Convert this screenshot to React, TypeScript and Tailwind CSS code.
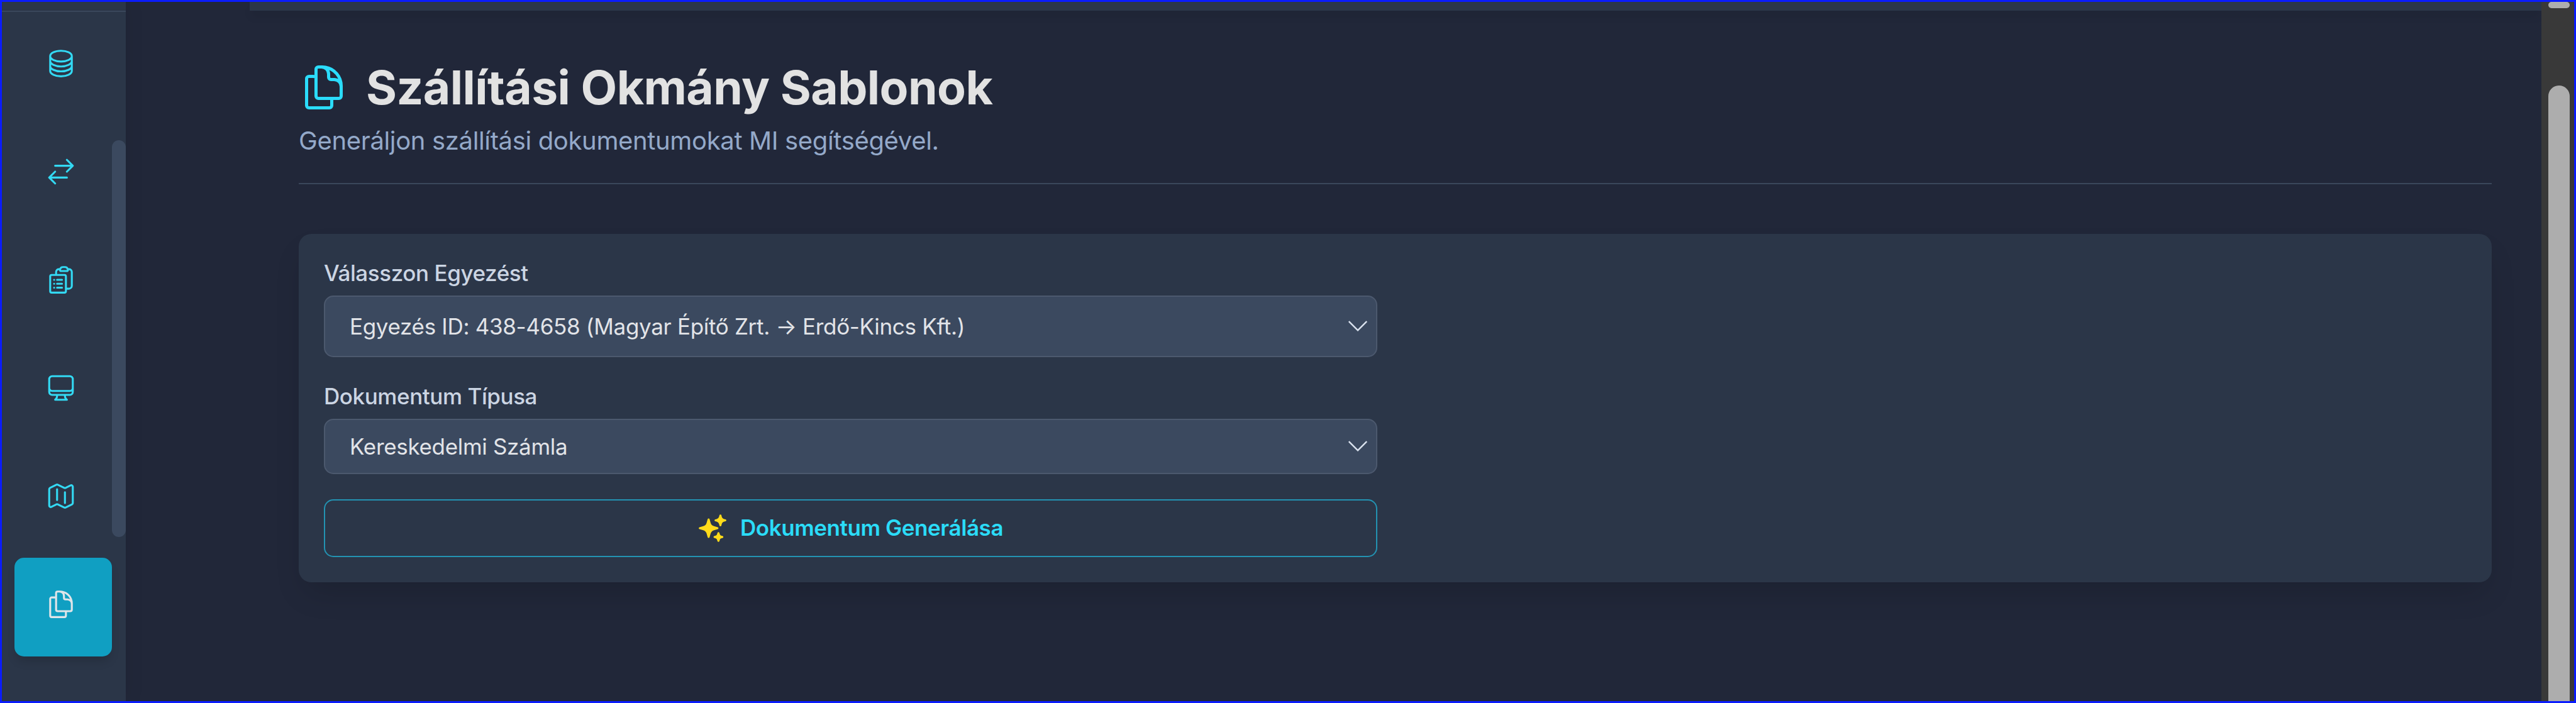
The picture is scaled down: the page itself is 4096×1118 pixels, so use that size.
import type { ComponentType } from "react";
import {
  HiOutlineCircleStack,
  HiOutlineArrowsRightLeft,
  HiOutlineClipboardDocumentList,
  HiOutlineComputerDesktop,
  HiOutlineMap,
  HiOutlineDocumentDuplicate,
  HiSparkles,
} from "react-icons/hi2";

type Icon = ComponentType<{ className?: string }>;

const navIcons: Icon[] = [
  HiOutlineCircleStack,
  HiOutlineArrowsRightLeft,
  HiOutlineClipboardDocumentList,
  HiOutlineComputerDesktop,
  HiOutlineMap,
];

function Sidebar() {
  return (
    <aside className="relative z-10 flex w-[197px] shrink-0 flex-col bg-[#2b3648] shadow-[0_0_30px_rgba(0,0,0,0.08)]">
      <div className="h-[16px] shrink-0 border-b-2 border-[#3a475b]" />
      <nav className="flex flex-col pt-[8px] pl-5">
        {navIcons.map((NavIcon, i) => (
          <a key={i} className="mb-[15px] flex h-[157px] w-[155px] items-center justify-center pr-2 pb-[9px]">
            <NavIcon className="size-[50px] text-[#33d9f3]" />
          </a>
        ))}
        <a className="flex h-[157px] w-[155px] items-center justify-center rounded-[15px] bg-[#109fc2] pr-2 pb-[9px] shadow-[0_10px_15px_-3px_rgba(0,0,0,0.15)]">
          <HiOutlineDocumentDuplicate className="size-[50px] text-[#dfe5e9]" />
        </a>
      </nav>
      <div className="absolute top-[220px] right-0 h-[631px] w-[22px] rounded-full bg-[#3b495f]" />
    </aside>
  );
}

function Select({ value, className }: { value: string; className: string }) {
  return (
    <div
      className={
        "flex items-center justify-between rounded-[15px] border-2 border-[#4c596e] bg-[#3b495f] pr-[14px] pl-[39px] text-[#e2e4e8] " +
        className
      }
    >
      <span>{value}</span>
      <svg viewBox="0 0 30 18" className="h-[18px] w-[30px]" fill="none" stroke="#dbe3ef" strokeWidth="2.4">
        <path d="M.8 1 15 15.4 29.2 1" />
      </svg>
    </div>
  );
}

export default function App() {
  return (
    <div className="flex h-[1118px] w-[4096px] overflow-hidden border-[3px] border-[#0a1cff] bg-[#212739] font-['Inter',sans-serif]">
      <Sidebar />
      <main className="flex min-w-0 flex-1 flex-col">
        <div className="ml-[197px] h-[14px] shrink-0 bg-[#2b3648] shadow-[0_10px_15px_-3px_rgba(0,0,0,0.12)]" />
        <div className="mr-[79px] ml-[275px] flex flex-col pt-[77px]">
          <header className="border-b-2 border-[#3a475b] pb-[37px]">
            <h1 className="flex items-center gap-[27px] text-[74.9px] leading-[90px] font-bold tracking-[-0.55px] text-[#e2e2e2]">
              <HiOutlineDocumentDuplicate className="size-[80px] text-[#2bdcfb]" />
              Szállítási Okmány Sablonok
            </h1>
            <p className="mt-[10px] text-[40px] leading-[60px] tracking-[-0.35px] text-[#94a9c9]">
              Generáljon szállítási dokumentumokat MI segítségével.
            </p>
          </header>
          <section className="mt-[79px] rounded-[20px] bg-[#2b3648] pt-[37px] pb-10 pl-10 shadow-[0_25px_50px_-12px_rgba(0,0,0,0.16)]">
            <div className="flex w-[1675px] flex-col text-[35px] leading-[50px] tracking-[-0.32px]">
              <label className="font-medium tracking-[-0.42px] text-[#cbd5e3]">Válasszon Egyezést</label>
              <Select className="mt-[11px] h-[98px]" value="Egyezés ID: 438-4658 (Magyar Építő Zrt. → Erdő-Kincs Kft.)" />
              <label className="mt-[37px] font-medium tracking-[-0.42px] text-[#cbd5e3]">Dokumentum Típusa</label>
              <Select className="mt-[11px] h-[88px]" value="Kereskedelmi Számla" />
              <button className="mt-10 flex h-[92px] items-center justify-center gap-[19px] rounded-[15px] border-2 border-[#2393b2] pr-[2px] font-semibold tracking-[-0.42px] text-[#2bdcf8]">
                <HiSparkles className="size-[50px] text-[#ffdb1a]" />
                <span className="pb-[2px]">Dokumentum Generálása</span>
              </button>
            </div>
          </section>
        </div>
      </main>
      <div className="flex w-[52px] shrink-0 flex-col items-center bg-[#393939] pl-[4px]">
        <div className="h-[10px] w-[34px] shrink-0 rounded-[5px] bg-[#adadad]" />
        <div className="mt-[123px] w-[34px] flex-1 rounded-t-[17px] bg-[#adadad]" />
      </div>
    </div>
  );
}
